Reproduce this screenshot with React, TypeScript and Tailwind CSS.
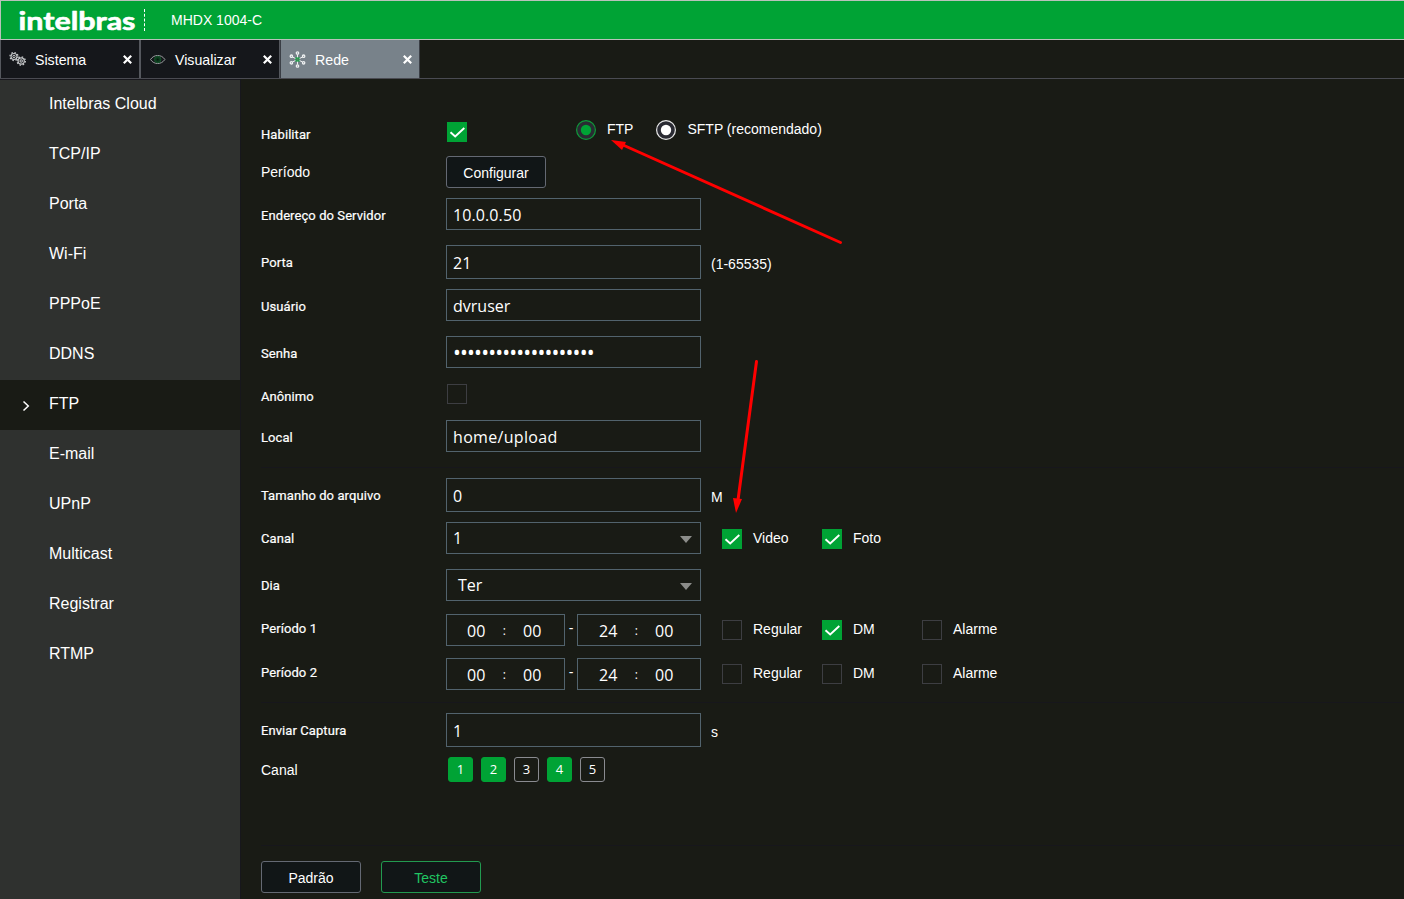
import type { ReactNode } from "react";
import clsx from "clsx";

const menu = [
  "Intelbras Cloud",
  "TCP/IP",
  "Porta",
  "Wi-Fi",
  "PPPoE",
  "DDNS",
  "FTP",
  "E-mail",
  "UPnP",
  "Multicast",
  "Registrar",
  "RTMP",
];

const channels = [
  { id: 1, on: true },
  { id: 2, on: true },
  { id: 3, on: false },
  { id: 4, on: true },
  { id: 5, on: false },
];

const smallLabel = "font-[Roboto] text-[13px] tracking-[0.08px] [-webkit-text-stroke:0.2px_#fff]";

const GearsIcon = () => (
  <svg width="18" height="18" viewBox="0 0 18 18" fill="none" stroke="#c4c6c8">
    <circle cx="5" cy="5.5" r="3" strokeWidth="1.1" />
    <circle cx="5" cy="5.5" r="4" strokeWidth="1.3" strokeDasharray="1.5 1.64" />
    <circle cx="5" cy="5.5" r="1.2" strokeWidth="1" />
    <circle cx="12.2" cy="10" r="3.1" strokeWidth="1.2" />
    <circle cx="12.2" cy="10" r="4.1" strokeWidth="1.4" strokeDasharray="1.5 1.72" />
    <circle cx="12.2" cy="10" r="1.2" strokeWidth="1.1" />
  </svg>
);

const EyeIcon = () => (
  <svg width="18" height="18" viewBox="0 0 18 18" fill="none">
    <path d="M1.5 8.5C3.5 5.6 6 4.5 8.7 4.5s5.3 1.1 7.2 4c-2 2.9-4.5 4-7.2 4s-5.3-1.1-7.2-4Z" stroke="#9a9ea0" />
    <circle cx="8.7" cy="8.5" r="3.2" fill="#0c3a1d" stroke="#14532b" />
    <circle cx="8.7" cy="8.5" r="1" fill="#061a0d" />
  </svg>
);

const NetworkIcon = () => (
  <svg width="18" height="18" viewBox="0 0 18 18" fill="none" stroke="#eef0f1">
    <path d="M8.5 3.5v10M3.5 6l10 5M13.5 6l-10 5" strokeWidth="1" />
    <circle cx="8.5" cy="2" r="1.2" strokeWidth="1.3" />
    <circle cx="8.5" cy="15" r="1.2" strokeWidth="1.3" />
    <circle cx="2.4" cy="5.2" r="1.2" strokeWidth="1.3" />
    <circle cx="14.6" cy="5.2" r="1.2" strokeWidth="1.3" />
    <circle cx="2.4" cy="11.8" r="1.2" strokeWidth="1.3" />
    <circle cx="14.6" cy="11.8" r="1.2" strokeWidth="1.3" />
    <rect x="7" y="7" width="3" height="3" fill="#5f7a68" stroke="#1aa548" strokeWidth="1.2" />
  </svg>
);

const Tab = ({ icon, label, active }: { icon: ReactNode; label: string; active?: boolean }) => (
  <div
    className={clsx(
      "flex h-[38px] w-[140px] items-center border-r border-l pr-[7px] pl-2",
      active ? "border-[#3a3e45] bg-[#78828a]" : "border-[#55585e] bg-[#15171b]",
    )}
  >
    <div className="pt-0.5">{icon}</div>
    <span className="ml-2 flex-1 pt-0.5 text-[14.2px] leading-none">{label}</span>
    <svg width="9" height="9" viewBox="0 0 9 9" stroke="#fff" strokeWidth="2.2">
      <path d="M.8.8l7.4 7.4M8.2.8.8 8.2" />
    </svg>
  </div>
);

const Row = ({
  label,
  className,
  labelClass = "pt-0.5",
  large,
  children,
}: {
  label: string;
  className: string;
  labelClass?: string;
  large?: boolean;
  children: ReactNode;
}) => (
  <div className={clsx("flex items-center", className)}>
    <div className={clsx("w-[185px] shrink-0 leading-4", large ? "text-sm" : [smallLabel, labelClass])}>{label}</div>
    {children}
  </div>
);

const Field = ({ children, className = "pl-1.5 pt-px" }: { children: ReactNode; className?: string }) => (
  <div
    className={clsx(
      "flex h-full w-[255px] shrink-0 items-center border border-[#52636d] font-['Open_Sans'] text-base leading-none",
      className,
    )}
  >
    {children}
  </div>
);

const Select = ({ value, className = "pl-1.5" }: { value: string; className?: string }) => (
  <Field className={clsx("justify-between pr-2", className)}>
    <span className="pb-px">{value}</span>
    <svg width="12" height="7" viewBox="0 0 12 7" fill="#8c8d8a" className="mt-0.5">
      <path d="M0 0h12L6 7z" />
    </svg>
  </Field>
);

const Check = ({ on }: { on?: boolean }) => (
  <div className={clsx("h-5 w-5 shrink-0", on ? "bg-[#00a335]" : "border border-[#3d3e42]")}>
    {on && (
      <svg width="20" height="20" viewBox="0 0 20 20" fill="none" stroke="#fff" strokeWidth="1.9">
        <path d="M3.5 10.2l4.7 4.3L17.3 6" />
      </svg>
    )}
  </div>
);

const CheckItem = ({ on, label }: { on?: boolean; label: string }) => (
  <div className="flex w-[100px] items-center">
    <Check on={on} />
    <span className="ml-[11px] pb-0.5 text-sm leading-4">{label}</span>
  </div>
);

const Radio = ({ on, label }: { on?: boolean; label: string }) => (
  <div className="flex items-center">
    <svg width="20" height="20" viewBox="0 0 20 20">
      <circle cx="10" cy="10" r="9.4" fill="#2a2b33" stroke={on ? "#0f9a3a" : "#e8e8e8"} strokeWidth="1.2" />
      <circle cx="10" cy="10" r="5.2" fill={on ? "#00a335" : "#fff"} />
    </svg>
    <span className="ml-[11px] pb-0.5 text-sm leading-4">{label}</span>
  </div>
);

const Time = ({ hour, className }: { hour: string; className: string }) => (
  <div
    className={clsx(
      "flex h-8 shrink-0 items-center border border-[#52636d] pt-0.5 font-['Open_Sans'] text-base leading-none tracking-[0.2px]",
      className,
    )}
  >
    <span className="w-[19px]">{hour}</span>
    <span className="w-[37px] text-center text-xs">:</span>
    <span>00</span>
  </div>
);

const Period = () => (
  <>
    <Time hour="00" className="w-[119px] pl-5" />
    <span className="w-3 pb-1 text-center text-sm leading-none">-</span>
    <Time hour="24" className="w-[124px] pl-[21px]" />
  </>
);

const Divider = ({ className }: { className: string }) => (
  <div className={clsx("h-px bg-[#17171c]", className)} />
);

const App = () => {
  return (
    <div className="relative flex h-[899px] w-[1404px] flex-col overflow-hidden bg-[#191b15] font-['Liberation_Sans',sans-serif] text-white">
      <header className="flex h-10 shrink-0 items-center border-y border-l border-[#b9c2bb] bg-[#00a335]">
        <svg width="122" height="30" viewBox="0 0 122 30" className="ml-4" role="img" aria-label="intelbras">
          <text
            x="1.5"
            y="24.5"
            className="font-[Lato] text-[24px] font-bold"
            fill="#fff"
            stroke="#fff"
            strokeWidth="0.6"
            strokeLinejoin="round"
            textLength="117"
            lengthAdjust="spacingAndGlyphs"
          >
            intelbras
          </text>
        </svg>
        <div className="ml-[5px] h-[22px] border-l border-dashed border-white" />
        <span className="ml-[26px] text-sm leading-none">MHDX 1004-C</span>
      </header>

      <div className="flex h-[39px] shrink-0 border-b border-[#4a4b52]">
        <Tab icon={<GearsIcon />} label="Sistema" />
        <Tab icon={<EyeIcon />} label="Visualizar" />
        <Tab icon={<NetworkIcon />} label="Rede" active />
      </div>

      <div className="flex flex-1">
        <nav className="w-60 shrink-0 border-t border-[#17171c] bg-[#2f312f]">
          {menu.map((item) => (
            <div
              key={item}
              className={clsx("flex h-[50px] items-center pb-0.5 pl-[22px]", item === "FTP" && "bg-[#191b15]")}
            >
              <svg width="9" height="12" viewBox="0 0 9 12" fill="none" stroke="#fff" strokeWidth="1.5" className="mt-[3px]">
                {item === "FTP" && <path d="M1.5 1.5L6.3 6l-4.8 4.5" />}
              </svg>
              <span className="ml-[18px] text-base leading-none">{item}</span>
            </div>
          ))}
        </nav>

        <main className="flex-1 border-l border-[#17171c] pl-5">
          <Row label="Habilitar" className="mt-[43px] h-5" labelClass="pt-[5px]">
            <div className="ml-px">
              <Check on />
            </div>
            <div className="ml-[109px] flex gap-[23px] pb-1">
              <Radio on label="FTP" />
              <Radio label="SFTP (recomendado)" />
            </div>
          </Row>
          <Row label="Período" className="mt-3.5 h-8" large>
            <button className="h-8 w-[100px] rounded-[3px] border border-[#646973] bg-[#111617] pt-0.5 text-sm">
              Configurar
            </button>
          </Row>
          <Row label="Endereço do Servidor" className="mt-2.5 h-8" labelClass="pt-1">
            <Field className="pl-1.5 pt-px tracking-[0.1px]">10.0.0.50</Field>
          </Row>
          <Row label="Porta" className="mt-[15px] h-[34px]">
            <Field>21</Field>
            <span className="ml-2.5 pt-1 text-sm leading-none">(1-65535)</span>
          </Row>
          <Row label="Usuário" className="mt-2.5 h-8" labelClass="pt-1">
            <Field>dvruser</Field>
          </Row>
          <Row label="Senha" className="mt-[15px] h-8" labelClass="pt-1">
            <Field>
              <span className="text-[21px] tracking-[-0.86px]">••••••••••••••••••••</span>
            </Field>
          </Row>
          <Row label="Anônimo" className="mt-4 h-5" labelClass="pt-[5px]">
            <div className="ml-px">
              <Check />
            </div>
          </Row>
          <Row label="Local" className="mt-4 h-8" labelClass="pt-1">
            <Field className="pl-1.5 pt-px tracking-[0.32px]">home/upload</Field>
          </Row>

          <Divider className="mt-[15px]" />

          <Row label="Tamanho do arquivo" className="mt-2.5 h-[34px]">
            <Field>0</Field>
            <span className="ml-2.5 pt-1 text-sm leading-none">M</span>
          </Row>
          <Row label="Canal" className="mt-2.5 h-8">
            <Select value="1" />
            <div className="ml-[21px] flex pt-0.5">
              <CheckItem on label="Video" />
              <CheckItem on label="Foto" />
            </div>
          </Row>
          <Row label="Dia" className="mt-[15px] h-8">
            <Select value="Ter" className="pl-[11px]" />
          </Row>
          <Row label="Período 1" className="mt-[13px] h-8" labelClass="pb-0.5">
            <Period />
            <div className="ml-[21px] flex">
              <CheckItem label="Regular" />
              <CheckItem on label="DM" />
              <CheckItem label="Alarme" />
            </div>
          </Row>
          <Row label="Período 2" className="mt-3 h-8" labelClass="pb-0.5">
            <Period />
            <div className="ml-[21px] flex">
              <CheckItem label="Regular" />
              <CheckItem label="DM" />
              <CheckItem label="Alarme" />
            </div>
          </Row>

          <Divider className="mt-3" />

          <Row label="Enviar Captura" className="mt-2.5 h-[34px]">
            <Field>1</Field>
            <span className="ml-2.5 pt-1 text-sm leading-none">s</span>
          </Row>
          <Row label="Canal" className="mt-2.5 h-[25px]" large>
            <div className="ml-0.5 flex gap-2">
              {channels.map(({ id, on }) => (
                <div
                  key={id}
                  className={clsx(
                    "flex h-[25px] w-[25px] items-center justify-center rounded-[3px] border font-['Open_Sans'] text-[13px] leading-none",
                    on ? "border-[#00a335] bg-[#00a335]" : "border-[#8a8b90]",
                  )}
                >
                  {id}
                </div>
              ))}
            </div>
          </Row>

          <Divider className="mt-[63px]" />

          <div className="mt-[15px] flex gap-5">
            <button className="h-8 w-[100px] rounded-[3px] border border-[#646973] bg-[#111617] pt-0.5 text-sm">
              Padrão
            </button>
            <button className="h-8 w-[100px] rounded-[3px] border border-[#229a50] bg-[#111617] pt-0.5 text-sm text-[#20c562]">
              Teste
            </button>
          </div>
        </main>
      </div>

      {/* arrows pointing at the FTP radio and the Video checkbox */}
      <svg className="pointer-events-none absolute inset-0" width="1404" height="899" fill="#f00" stroke="#f00">
        <path d="M840.5 242.5L623 145" strokeWidth="3" strokeLinecap="round" />
        <path d="M611 140l15 2-4 8z" stroke="none" />
        <path d="M756.5 361.5L738 500" strokeWidth="3" strokeLinecap="round" />
        <path d="M736 513l-3-15 9 1z" stroke="none" />
      </svg>
    </div>
  );
};

export default App;
